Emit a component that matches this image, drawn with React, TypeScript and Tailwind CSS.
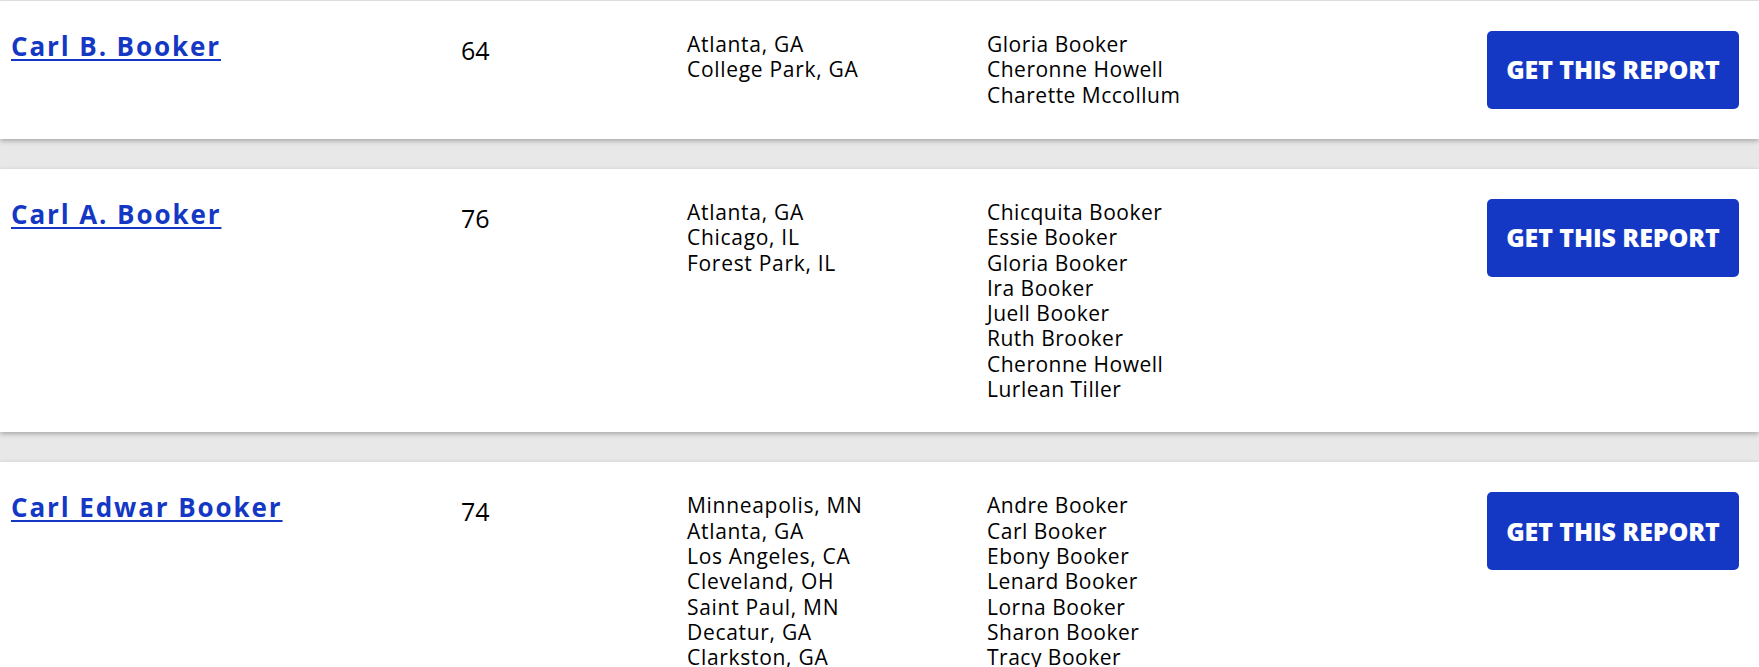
import React from 'react';

interface PersonRecord {
  name: string;
  age: number;
  locations: string[];
  relatives: string[];
}

const records: PersonRecord[] = [
  {
    name: 'Carl B. Booker',
    age: 64,
    locations: ['Atlanta, GA', 'College Park, GA'],
    relatives: ['Gloria Booker', 'Cheronne Howell', 'Charette Mccollum'],
  },
  {
    name: 'Carl A. Booker',
    age: 76,
    locations: ['Atlanta, GA', 'Chicago, IL', 'Forest Park, IL'],
    relatives: [
      'Chicquita Booker',
      'Essie Booker',
      'Gloria Booker',
      'Ira Booker',
      'Juell Booker',
      'Ruth Brooker',
      'Cheronne Howell',
      'Lurlean Tiller',
    ],
  },
  {
    name: 'Carl Edwar Booker',
    age: 74,
    locations: [
      'Minneapolis, MN',
      'Atlanta, GA',
      'Los Angeles, CA',
      'Cleveland, OH',
      'Saint Paul, MN',
      'Decatur, GA',
      'Clarkston, GA',
    ],
    relatives: [
      'Andre Booker',
      'Carl Booker',
      'Ebony Booker',
      'Lenard Booker',
      'Lorna Booker',
      'Sharon Booker',
      'Tracy Booker',
    ],
  },
];

function ResultRow({ record }: { record: PersonRecord }) {
  return (
    <div className="flex items-start bg-white pt-[30px] pb-[30px] pl-[11px] pr-[20px] shadow-[0_2px_5px_rgba(0,0,0,0.28)]">
      {/* Name */}
      <div className="w-[450px] shrink-0">
        <a
          href="#"
          className="text-[26px] leading-[30px] font-bold tracking-[1.9px] text-[#1438c4] underline decoration-2 underline-offset-[3px]"
        >
          {record.name}
        </a>
      </div>

      {/* Age */}
      <div className="w-[226px] shrink-0 pt-[4px] text-[25px] leading-[30px] text-black">{record.age}</div>

      {/* Locations */}
      <div className="w-[300px] shrink-0 pt-[1px] text-[21px] leading-[25.3px] tracking-[0.7px] text-black">
        {record.locations.map((loc) => (
          <div key={loc}>{loc}</div>
        ))}
      </div>

      {/* Relatives */}
      <div className="flex-1 pt-[1px] text-[21px] leading-[25.3px] tracking-[0.5px] text-black">
        {record.relatives.map((rel) => (
          <div key={rel}>{rel}</div>
        ))}
      </div>

      <button className="flex h-[78px] w-[252px] shrink-0 items-center justify-center rounded-[5px] bg-[#1438c4] text-[25px] font-extrabold tracking-[-0.1px] text-white">
        GET THIS REPORT
      </button>
    </div>
  );
}

export default function App() {
  return (
    <div className="min-h-screen bg-[#e8e8e8] pt-[1px] font-['Open_Sans','Liberation_Sans',sans-serif]">
      <div className="flex flex-col gap-[30px]">
        {records.map((r) => (
          <ResultRow key={r.name} record={r} />
        ))}
      </div>
    </div>
  );
}
